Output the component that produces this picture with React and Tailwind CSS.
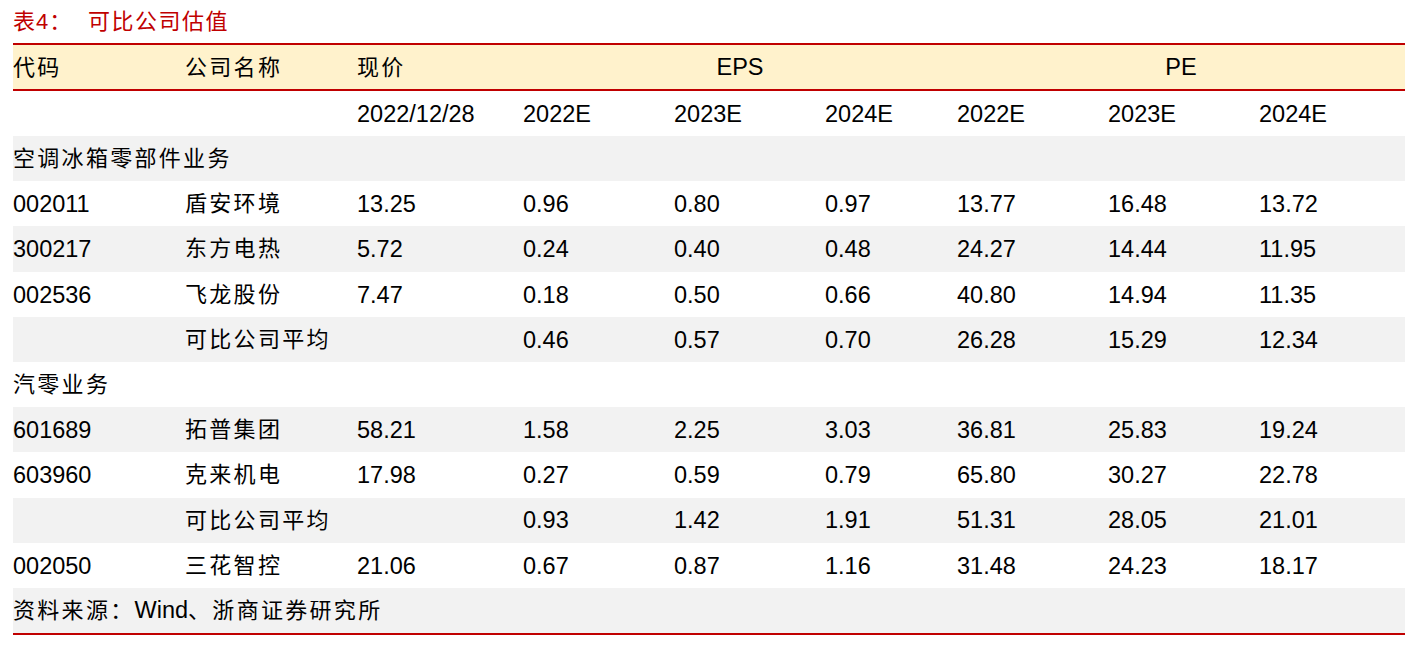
import React from "react";

const font = { fontFamily: '"Liberation Sans", "Noto Sans CJK SC", sans-serif' };

const rows = [
  { type: "section", label: "空调冰箱零部件业务", bg: true },
  { cells: ["002011", "盾安环境", "13.25", "0.96", "0.80", "0.97", "13.77", "16.48", "13.72"], bg: false },
  { cells: ["300217", "东方电热", "5.72", "0.24", "0.40", "0.48", "24.27", "14.44", "11.95"], bg: true },
  { cells: ["002536", "飞龙股份", "7.47", "0.18", "0.50", "0.66", "40.80", "14.94", "11.35"], bg: false },
  { cells: ["", "可比公司平均", "", "0.46", "0.57", "0.70", "26.28", "15.29", "12.34"], bg: true },
  { type: "section", label: "汽零业务", bg: false },
  { cells: ["601689", "拓普集团", "58.21", "1.58", "2.25", "3.03", "36.81", "25.83", "19.24"], bg: true },
  { cells: ["603960", "克来机电", "17.98", "0.27", "0.59", "0.79", "65.80", "30.27", "22.78"], bg: false },
  { cells: ["", "可比公司平均", "", "0.93", "1.42", "1.91", "51.31", "28.05", "21.01"], bg: true },
  { cells: ["002050", "三花智控", "21.06", "0.67", "0.87", "1.16", "31.48", "24.23", "18.17"], bg: false },
];

const grid =
  "grid grid-cols-[172px_172px_166px_151px_151px_132px_151px_151px_146px] items-center";

function Cell({ children, cjk }) {
  return (
    <div
      className={
        cjk
          ? "text-[22px] tracking-[2.3px] whitespace-nowrap"
          : "text-[23.5px] whitespace-nowrap pt-[2px]"
      }
    >
      {children}
    </div>
  );
}

const isCjk = (s) => /[\u4e00-\u9fff]/.test(s);

export default function App() {
  return (
    <div className="w-[1410px] h-[650px] bg-white text-black" style={font}>
      <div className="pl-[13px] w-[1405px]">
        <div className="h-[43px] flex items-center text-[22px] text-[#c00000]">
          <span className="w-[75px] tracking-[1px]">表4：</span>
          <span className="tracking-[1.5px]">可比公司估值</span>
        </div>
        <div className="border-t-2 border-b-2 border-[#c00000]">
          <div className={`${grid} h-[44px] bg-[#fff2cc]`}>
            <Cell cjk>代码</Cell>
            <Cell cjk>公司名称</Cell>
            <Cell cjk>现价</Cell>
            <div className="col-span-3 text-center text-[23.5px] pt-[2px]">EPS</div>
            <div className="col-span-3 text-center text-[23.5px] pt-[2px]">PE</div>
          </div>
        </div>
        <div className={`${grid} h-[45px]`}>
          <div />
          <div />
          <Cell>2022/12/28</Cell>
          <Cell>2022E</Cell>
          <Cell>2023E</Cell>
          <Cell>2024E</Cell>
          <Cell>2022E</Cell>
          <Cell>2023E</Cell>
          <Cell>2024E</Cell>
        </div>
        {rows.map((r, i) =>
          r.type === "section" ? (
            <div
              key={i}
              className={`h-[45.2px] flex items-center text-[22px] tracking-[2.3px] ${r.bg ? "bg-[#f2f2f2]" : ""}`}
            >
              {r.label}
            </div>
          ) : (
            <div key={i} className={`${grid} h-[45.2px] ${r.bg ? "bg-[#f2f2f2]" : ""}`}>
              {r.cells.map((c, j) => (
                <Cell key={j} cjk={isCjk(c)}>
                  {c}
                </Cell>
              ))}
            </div>
          )
        )}
        <div className="h-[45px] flex items-center bg-[#f2f2f2] text-[22px] border-b-2 border-[#c00000] box-content">
          <span className="tracking-[2.3px]">资料来源：</span>
          <span className="text-[23.5px]">Wind</span>
          <span className="tracking-[2.3px]">、浙商证券研究所</span>
        </div>
      </div>
    </div>
  );
}
